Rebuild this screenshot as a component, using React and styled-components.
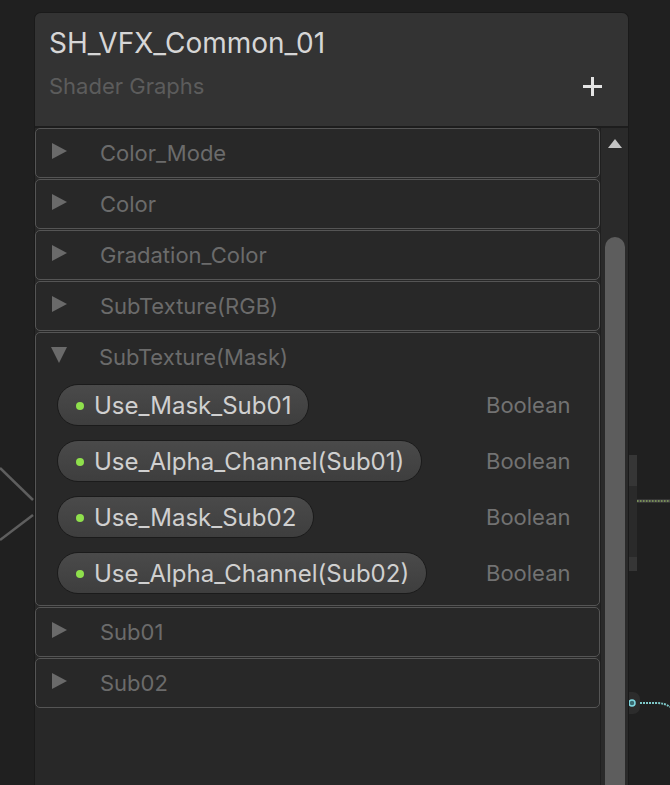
import React from "react";
import styled, { createGlobalStyle } from "styled-components";

const GlobalStyle = createGlobalStyle`
  html, body {
    margin: 0;
    padding: 0;
    background: #202020;
  }
  body {
    font-family: Inter, "Noto Sans", "Liberation Sans", sans-serif;
  }
`;

const Canvas = styled.div`
  position: relative;
  width: 670px;
  height: 785px;
  overflow: hidden;
  background: #202020;
  padding: 12px 0 0 34px;
  box-sizing: border-box;
`;

const Edges = styled.svg`
  position: absolute;
  left: 0;
  top: 0;
  width: 670px;
  height: 785px;
  pointer-events: none;
`;

const Blackboard = styled.div`
  position: relative;
  width: 595px;
  height: 790px;
  display: flex;
  flex-direction: column;
  background: #282828;
  border: 1px solid #1a1a1a;
  border-bottom: none;
  border-radius: 7px 7px 0 0;
  box-sizing: border-box;
  overflow: hidden;
`;

const Header = styled.div`
  height: 115px;
  flex-shrink: 0;
  background: #333333;
  border-bottom: 2px solid #1d1d1d;
  padding: 13px 14px 0 14px;
  box-sizing: border-box;
  display: flex;
  flex-direction: column;
`;

const Title = styled.div`
  color: #d6d6d6;
  font-size: 28px;
  line-height: 34px;
`;

const SubRow = styled.div`
  display: flex;
  justify-content: space-between;
  align-items: center;
  margin-top: 13px;
`;

const Subtitle = styled.div`
  color: #5c5c5c;
  font-size: 22px;
  line-height: 26px;
`;

const AddButton = styled.svg`
  width: 19px;
  height: 19px;
  margin-right: 12px;
  margin-top: 1px;
`;

const Body = styled.div`
  flex: 1;
  display: flex;
`;

const List = styled.div`
  flex: 1;
  display: flex;
  flex-direction: column;
  gap: 1px;
`;

const Section = styled.div`
  border: 1px solid #555555;
  border-radius: 5px;
  background: #282828;
`;

const SectionHead = styled.div`
  height: 48px;
  display: flex;
  align-items: center;
  padding-left: 16px;
`;

const Arrow = styled.div`
  width: 0;
  height: 0;
  margin-top: -5px;
  ${({ $open }) =>
    $open
      ? `border-left: 8.5px solid transparent;
         border-right: 8.5px solid transparent;
         border-top: 16px solid #6a6a6a;
         margin-left: -1px;
         margin-right: 32px;`
      : `border-top: 8.5px solid transparent;
         border-bottom: 8.5px solid transparent;
         border-left: 15px solid #6a6a6a;
         margin-right: 33px;`}
`;

const SectionLabel = styled.div`
  color: #6b6b6b;
  font-size: 22px;
`;

const Fields = styled.div`
  display: flex;
  flex-direction: column;
  gap: 14px;
  padding: 3px 0 11px 21px;
`;

const FieldRow = styled.div`
  display: flex;
  align-items: center;
  justify-content: space-between;
`;

const Pill = styled.div`
  height: 42px;
  box-sizing: border-box;
  display: flex;
  align-items: center;
  gap: 10px;
  padding: 0 17px 0 18px;
  border: 1px solid #1b1b1b;
  border-radius: 21px;
  background: linear-gradient(#4a4a4a, #3e3e3e);
  color: #d0d0d0;
  font-size: 24px;
`;

const Dot = styled.span`
  width: 8px;
  height: 8px;
  border-radius: 50%;
  background: #8fe04c;
  margin-top: 2px;
`;

const TypeLabel = styled.div`
  color: #727272;
  font-size: 22px;
  width: 113px;
`;

const Scrollbar = styled.div`
  width: 27px;
  display: flex;
  flex-direction: column;
  align-items: center;
  background: #2a2a2a;
  border-left: 1px solid #1f1f1f;
`;

const UpArrow = styled.div`
  width: 0;
  height: 0;
  margin-top: 11px;
  border-left: 7px solid transparent;
  border-right: 7px solid transparent;
  border-bottom: 9px solid #c4c4c4;
`;

const Thumb = styled.div`
  width: 20px;
  flex: 1;
  margin-top: 89px;
  background: #5d5d5d;
  border-radius: 10px 10px 0 0;
`;

const PortBar = styled.div`
  position: absolute;
  left: 629px;
  top: 455px;
  width: 8px;
  height: 116px;
  background: linear-gradient(
    #363636 0 31px,
    #2a2a2a 31px 102px,
    #363636 102px
  );
`;

const PortNub = styled.div`
  position: absolute;
  left: 628px;
  top: 692px;
  width: 12px;
  height: 22px;
  border-radius: 0 7px 7px 0;
  background: #2c2c2c;
`;

const sections = [
  { name: "Color_Mode" },
  { name: "Color" },
  { name: "Gradation_Color" },
  { name: "SubTexture(RGB)" },
  {
    name: "SubTexture(Mask)",
    open: true,
    fields: [
      "Use_Mask_Sub01",
      "Use_Alpha_Channel(Sub01)",
      "Use_Mask_Sub02",
      "Use_Alpha_Channel(Sub02)",
    ],
  },
  { name: "Sub01" },
  { name: "Sub02" },
];

export default function App() {
  return (
    <>
      <GlobalStyle />
      <Canvas>
        <Edges viewBox="0 0 670 785">
          <line x1="0" y1="468" x2="33" y2="500" stroke="#5e5e5e" strokeWidth="2.5" />
          <line x1="0" y1="540" x2="33" y2="515" stroke="#5e5e5e" strokeWidth="2.5" />
          <line x1="637" y1="501" x2="670" y2="501" stroke="#4a4a4a" strokeWidth="3" />
          <line x1="637" y1="501" x2="670" y2="501" stroke="#9fcf60" strokeWidth="1.2" strokeDasharray="1.5 1.5" />
          <path d="M640 703 L656 703 Q665 703 670 707" fill="none" stroke="#7ec8c8" strokeWidth="2" strokeDasharray="2 1" />
        </Edges>
        <PortBar />
        <PortNub>
          <svg width="12" height="22" viewBox="0 0 12 22">
            <circle cx="4" cy="11" r="3" fill="#3a6a70" stroke="#7fd8e0" strokeWidth="1.5" />
          </svg>
        </PortNub>
        <Blackboard>
          <Header>
            <Title>SH_VFX_Common_01</Title>
            <SubRow>
              <Subtitle>Shader Graphs</Subtitle>
              <AddButton viewBox="0 0 19 19">
                <rect x="8" y="0" width="3" height="19" fill="#e4e4e4" />
                <rect x="0" y="8" width="19" height="3" fill="#e4e4e4" />
              </AddButton>
            </SubRow>
          </Header>
          <Body>
            <List>
              {sections.map((s) => (
                <Section key={s.name}>
                  <SectionHead>
                    <Arrow $open={s.open} />
                    <SectionLabel>{s.name}</SectionLabel>
                  </SectionHead>
                  {s.open && (
                    <Fields>
                      {s.fields.map((f) => (
                        <FieldRow key={f}>
                          <Pill>
                            <Dot />
                            {f}
                          </Pill>
                          <TypeLabel>Boolean</TypeLabel>
                        </FieldRow>
                      ))}
                    </Fields>
                  )}
                </Section>
              ))}
            </List>
            <Scrollbar>
              <UpArrow />
              <Thumb />
            </Scrollbar>
          </Body>
        </Blackboard>
      </Canvas>
    </>
  );
}
